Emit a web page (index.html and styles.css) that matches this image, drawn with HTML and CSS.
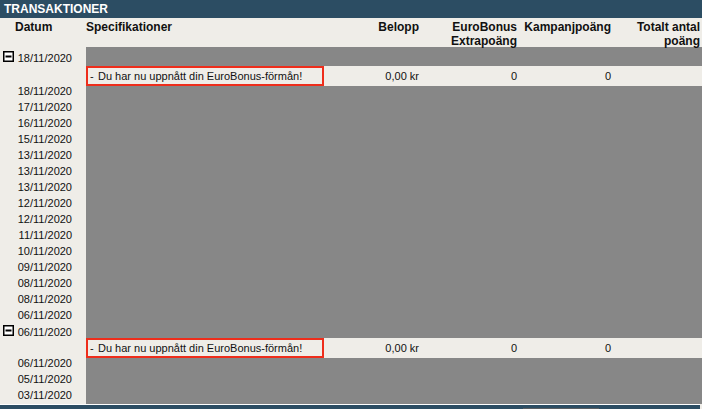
FILE: index.html
```html
<!DOCTYPE html>
<html lang="sv">
<head>
    <meta charset="UTF-8">
    <meta name="viewport" content="width=device-width, initial-scale=1.0">
    <title>Transaktioner</title>
    <link rel="stylesheet" href="styles.css">
</head>
<body>
    <div class="page">
        <div class="scroll">
            <div class="title">TRANSAKTIONER</div>
            <table class="trans">
                <colgroup>
                    <col class="c-date">
                    <col class="c-spec">
                    <col class="c-amount">
                    <col class="c-extra">
                    <col class="c-camp">
                    <col class="c-total">
                </colgroup>
                <thead>
                    <tr>
                        <th class="h-date"><div class="hd">Datum</div></th>
                        <th class="h-spec"><div class="hd">Specifikationer</div></th>
                        <th class="num"><div class="hd">Belopp</div></th>
                        <th class="num"><div class="hd">EuroBonus Extrapoäng</div></th>
                        <th class="num"><div class="hd">Kampanjpoäng</div></th>
                        <th class="num"><div class="hd">Totalt antal poäng</div></th>
                    </tr>
                </thead>
                <tbody>
                    <tr class="group first">
                        <td class="date"><span class="toggle"><svg width="11" height="11" viewBox="0 0 11 11"><rect x="0.75" y="0.75" width="9.5" height="9.5" fill="#fff" stroke="#000" stroke-width="1.5"/><line x1="2.5" y1="5.5" x2="8.5" y2="5.5" stroke="#000" stroke-width="2"/></svg></span>18/11/2020</td>
                        <td class="g"></td><td class="g"></td><td class="g"></td><td class="g"></td><td class="g"></td>
                    </tr>
                    <tr class="hl">
                        <td></td>
                        <td class="spec"><span class="dash">-</span>Du har nu uppnått din EuroBonus-förmån!</td>
                        <td class="num">0,00 kr</td>
                        <td class="num">0</td>
                        <td class="num">0</td>
                        <td></td>
                    </tr>
                    <tr class="row"><td class="date">18/11/2020</td><td class="g"></td><td class="g"></td><td class="g"></td><td class="g"></td><td class="g"></td></tr>
                    <tr class="row"><td class="date">17/11/2020</td><td class="g"></td><td class="g"></td><td class="g"></td><td class="g"></td><td class="g"></td></tr>
                    <tr class="row"><td class="date">16/11/2020</td><td class="g"></td><td class="g"></td><td class="g"></td><td class="g"></td><td class="g"></td></tr>
                    <tr class="row"><td class="date">15/11/2020</td><td class="g"></td><td class="g"></td><td class="g"></td><td class="g"></td><td class="g"></td></tr>
                    <tr class="row"><td class="date">13/11/2020</td><td class="g"></td><td class="g"></td><td class="g"></td><td class="g"></td><td class="g"></td></tr>
                    <tr class="row"><td class="date">13/11/2020</td><td class="g"></td><td class="g"></td><td class="g"></td><td class="g"></td><td class="g"></td></tr>
                    <tr class="row"><td class="date">13/11/2020</td><td class="g"></td><td class="g"></td><td class="g"></td><td class="g"></td><td class="g"></td></tr>
                    <tr class="row"><td class="date">12/11/2020</td><td class="g"></td><td class="g"></td><td class="g"></td><td class="g"></td><td class="g"></td></tr>
                    <tr class="row"><td class="date">12/11/2020</td><td class="g"></td><td class="g"></td><td class="g"></td><td class="g"></td><td class="g"></td></tr>
                    <tr class="row"><td class="date">11/11/2020</td><td class="g"></td><td class="g"></td><td class="g"></td><td class="g"></td><td class="g"></td></tr>
                    <tr class="row"><td class="date">10/11/2020</td><td class="g"></td><td class="g"></td><td class="g"></td><td class="g"></td><td class="g"></td></tr>
                    <tr class="row"><td class="date">09/11/2020</td><td class="g"></td><td class="g"></td><td class="g"></td><td class="g"></td><td class="g"></td></tr>
                    <tr class="row"><td class="date">08/11/2020</td><td class="g"></td><td class="g"></td><td class="g"></td><td class="g"></td><td class="g"></td></tr>
                    <tr class="row"><td class="date">08/11/2020</td><td class="g"></td><td class="g"></td><td class="g"></td><td class="g"></td><td class="g"></td></tr>
                    <tr class="row"><td class="date">06/11/2020</td><td class="g"></td><td class="g"></td><td class="g"></td><td class="g"></td><td class="g"></td></tr>
                    <tr class="group">
                        <td class="date"><span class="toggle"><svg width="11" height="11" viewBox="0 0 11 11"><rect x="0.75" y="0.75" width="9.5" height="9.5" fill="#fff" stroke="#000" stroke-width="1.5"/><line x1="2.5" y1="5.5" x2="8.5" y2="5.5" stroke="#000" stroke-width="2"/></svg></span>06/11/2020</td>
                        <td class="g"></td><td class="g"></td><td class="g"></td><td class="g"></td><td class="g"></td>
                    </tr>
                    <tr class="hl">
                        <td></td>
                        <td class="spec"><span class="dash">-</span>Du har nu uppnått din EuroBonus-förmån!</td>
                        <td class="num">0,00 kr</td>
                        <td class="num">0</td>
                        <td class="num">0</td>
                        <td></td>
                    </tr>
                    <tr class="row"><td class="date">06/11/2020</td><td class="g"></td><td class="g"></td><td class="g"></td><td class="g"></td><td class="g"></td></tr>
                    <tr class="row"><td class="date">05/11/2020</td><td class="g"></td><td class="g"></td><td class="g"></td><td class="g"></td><td class="g"></td></tr>
                    <tr class="row"><td class="date">03/11/2020</td><td class="g"></td><td class="g"></td><td class="g"></td><td class="g"></td><td class="g"></td></tr>
                </tbody>
            </table>
        </div>
        <div class="footer"><div class="footer-btn"></div></div>
    </div>
</body>
</html>
```

FILE: styles.css
```css
html, body {
    margin: 0;
    padding: 0;
}
body {
    font-family: "Liberation Sans", Arial, sans-serif;
    background-color: #efede8;
    color: #111;
}
.page {
    width: 702px;
    height: 409px;
    display: flex;
    flex-direction: column;
    overflow: hidden;
}
.scroll {
    flex: 1;
    overflow: hidden;
}
.title {
    height: 18px;
    background-color: #2c4d63;
    color: #fff;
    font-weight: bold;
    font-size: 12px;
    line-height: 18px;
    padding-left: 4px;
}
.trans {
    width: 702px;
    table-layout: fixed;
    border-collapse: separate;
    border-spacing: 0;
    font-size: 11px;
}
.c-date { width: 86px; }
.c-spec { width: 238px; }
.c-amount { width: 98px; }
.c-extra { width: 98px; }
.c-camp { width: 94px; }
.c-total { width: 88px; }

.trans th {
    padding: 2px 0 0 0;
    vertical-align: top;
    font-size: 12px;
    line-height: 14px;
    font-weight: bold;
    text-align: left;
}
.hd { height: 27px; }
.trans th.h-date { padding-left: 15px; }
.trans th.num { text-align: right; padding-right: 3px; }
.trans th:last-child { padding-right: 2px; }

.trans td {
    padding: 0;
    line-height: 12px;
}
.trans td.g { background-color: #878787; }

.row { height: 16px; }
.row td { vertical-align: top; line-height: 10px; }
.group { height: 12px; }
.group.first { height: 19px; }
.group td { vertical-align: bottom; }
.group.first td.date { padding-bottom: 2px; }

.date {
    text-align: right;
    padding-right: 14px !important;
    position: relative;
}
.toggle {
    position: absolute;
    left: 3px;
    bottom: 2px;
    width: 11px;
    height: 11px;
}
.group.first .toggle { bottom: 4px; }
.toggle svg { display: block; }

.hl { height: 20px; }
.hl td { vertical-align: middle; }
.hl td.num { text-align: right; padding-right: 3px; }
.spec {
    border: 2px solid #ee2d1b;
    padding-left: 2px !important;
    white-space: nowrap;
}
.dash {
    display: inline-block;
    width: 8px;
}

.footer {
    height: 4px;
    border-top: 1px solid #fff;
    background-color: #2c4d63;
    margin-right: 2px;
    position: relative;
}
.footer-btn {
    position: absolute;
    left: 523px;
    top: 3px;
    width: 76px;
    height: 2px;
    background-color: #5a5f63;
}
```
